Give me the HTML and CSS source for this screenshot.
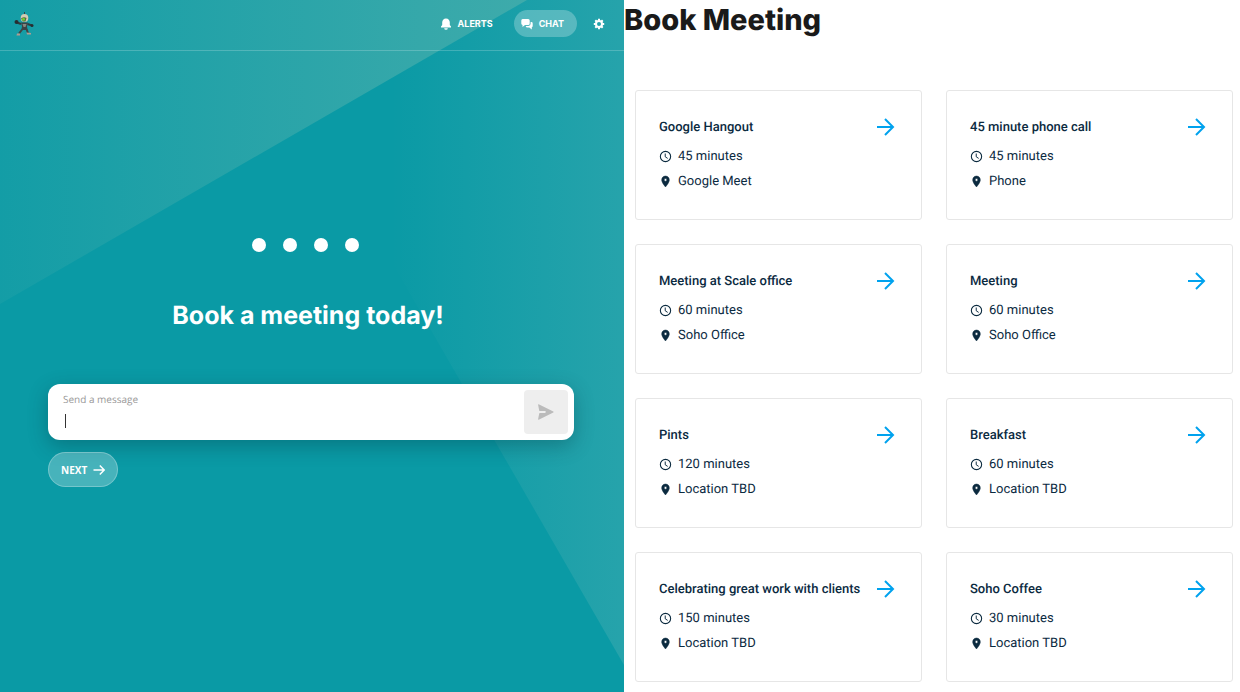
FILE: index.html
```html
<!DOCTYPE html>
<html lang="en">
<head>
    <meta charset="utf-8">
    <meta name="viewport" content="width=device-width, initial-scale=1">
    <title>Book Meeting</title>
    <link rel="stylesheet" href="styles.css">
</head>
<body>
    <!-- Shared icons -->
    <svg class="sprite" aria-hidden="true">
        <symbol id="arrow" viewBox="0 0 24 24">
            <path d="M3 11h16M11 3l8 8-8 8" fill="none" stroke="currentColor" stroke-width="2"/>
        </symbol>
        <symbol id="clock" viewBox="0 0 24 24">
            <circle cx="12" cy="12" r="9.5" fill="none" stroke="currentColor" stroke-width="2"/>
            <path d="M11.5 6.5v6l4.5 3" fill="none" stroke="currentColor" stroke-width="1.8"/>
        </symbol>
        <symbol id="pin" viewBox="0 0 24 24">
            <path d="M12 2C8.1 2 5 5.1 5 9c0 5.2 7 13 7 13s7-7.8 7-13c0-3.9-3.1-7-7-7zm0 9.5a2.5 2.5 0 0 1 0-5 2.5 2.5 0 0 1 0 5z" fill="currentColor" stroke="currentColor"/>
        </symbol>
    </svg>

    <div class="layout">
        <section class="chat">
            <svg class="backdrop" viewBox="0 0 624 692" preserveAspectRatio="xMidYMid slice" aria-hidden="true">
                <defs>
                    <linearGradient id="beamTop" gradientUnits="userSpaceOnUse" x1="0" y1="0" x2="526" y2="0">
                        <stop offset="0" stop-color="#f5e6c0" stop-opacity="0.04"/>
                        <stop offset="1" stop-color="#f5e6c0" stop-opacity="0.22"/>
                    </linearGradient>
                    <linearGradient id="beamRight" gradientUnits="userSpaceOnUse" x1="390" y1="0" x2="624" y2="0">
                        <stop offset="0" stop-color="#f5e6d8" stop-opacity="0"/>
                        <stop offset="1" stop-color="#f5e6d8" stop-opacity="0.12"/>
                    </linearGradient>
                </defs>
                <path d="M0 0H527L0 304z" fill="url(#beamTop)"/>
                <path d="M527 0H624V665L390 259V79z" fill="url(#beamRight)"/>
            </svg>

            <header class="topbar">
                <a class="logo" href="#" aria-label="Home">
                    <svg viewBox="0 0 20 24">
                        <path d="M10.5 0v3" stroke="#33464a" stroke-width="1"/>
                        <path d="M7 12 3 10.5M13.5 12l4.5 1.5" stroke="#303a3e" stroke-width="2" fill="none"/>
                        <path d="M8.5 17 5 21.5M12.5 17l1.5 4" stroke="#3f4646" stroke-width="2" fill="none"/>
                        <path d="M7 10.5h7l-1 4 .5 3.5h-6l.5-3.5z" fill="#3c4245"/>
                        <path d="M8.5 12h4l-1 3h-2z" fill="#858780"/>
                        <circle cx="2.5" cy="10" r="2" fill="#262e31"/>
                        <circle cx="18" cy="13.5" r="1.5" fill="#262e31"/>
                        <path d="M3 21.5h3v2H2.5zM12.5 20.5l4.5.5v1.5h-4z" fill="#b09c91"/>
                        <ellipse cx="10.5" cy="6" rx="3.8" ry="4" fill="#d3cbb2"/>
                        <path d="M7 6.5q3-2 5.5-.5l-1 3.5H9z" fill="#546747"/>
                        <circle cx="9.5" cy="7.3" r="1.5" fill="#6fce2c"/>
                    </svg>
                </a>
                <nav class="menu">
                    <button class="menu-item" type="button">
                        <svg viewBox="0 0 12 12"><path d="M6 .5C3.600.5 2.200 2.200 2.200 4.500v2.500L1 8.500v1h10v-1L9.800 7V4.500C9.800 2.200 8.400.5 6 .5zM4.200 10.200a1.800 1.500 0 0 0 3.600 0z" fill="currentColor"/></svg>
                        Alerts
                    </button>
                    <button class="menu-item active" type="button">
                        <svg viewBox="0 0 12 12"><path d="M2 1h5.200A1.500 1.500 0 0 1 8.700 2.500v3A1.500 1.500 0 0 1 7.200 7H4L1.500 9V7Q.3 6.800.3 5.500v-3A1.500 1.500 0 0 1 2 1zM9.600 4h.6A1.400 1.400 0 0 1 11.700 5.400v2.600q0 1-.9 1.300v2.200L8.300 9.500H6.300Q5 9.500 4.700 8H7.500Q9.600 7.900 9.600 5.800z" fill="currentColor"/></svg>
                        Chat
                    </button>
                    <button class="menu-item settings" type="button" aria-label="Settings">
                        <svg viewBox="0 0 12 12"><circle cx="6" cy="6" r="3" fill="none" stroke="currentColor" stroke-width="2"/><path d="M6 .8v2M6 9.200v2M.8 6h2M9.200 6h2M2.300 2.300l1.400 1.400M8.300 8.300l1.400 1.400M2.300 9.700l1.400-1.400M8.300 3.700l1.400-1.400" stroke="currentColor" stroke-width="2"/></svg>
                    </button>
                </nav>
            </header>

            <main class="conversation">
                <div class="intro">
                    <div class="dots"><i></i><i></i><i></i><i></i></div>
                    <h2>Book a meeting today!</h2>
                </div>
                <form class="composer">
                    <div class="field">
                        <label for="message">Send a message</label>
                        <input type="text" id="message" autocomplete="off">
                    </div>
                    <button class="send" type="button" aria-label="Send">
                        <svg viewBox="0 0 16 16"><path d="M.7.3Q.2 0 .1.700L1.200 6.500Q1.300 7.100 2 7.100H7Q7.800 7.200 7.800 8T7 8.900H2Q1.300 8.900 1.200 9.500L.1 15.300Q.2 16 .7 15.700L15.300 8.500Q16 8 15.300 7.500z" fill="currentColor"/></svg>
                    </button>
                </form>
                <button class="next" type="button">
                    Next
                    <svg viewBox="0 0 12 12"><path d="M.5 6h10.500M6.800 1.500 11.200 6l-4.400 4.500" fill="none" stroke="currentColor" stroke-width="1.500"/></svg>
                </button>
            </main>
        </section>

        <section class="booking">
            <h1>Book Meeting</h1>
            <div class="cards">
                <a class="card" href="#">
                    <h3>Google Hangout <svg><use href="#arrow"/></svg></h3>
                    <p><svg><use href="#clock"/></svg>45 minutes</p>
                    <p><svg><use href="#pin"/></svg>Google Meet</p>
                </a>
                <a class="card" href="#">
                    <h3>45 minute phone call <svg><use href="#arrow"/></svg></h3>
                    <p><svg><use href="#clock"/></svg>45 minutes</p>
                    <p><svg><use href="#pin"/></svg>Phone</p>
                </a>
                <a class="card" href="#">
                    <h3>Meeting at Scale office <svg><use href="#arrow"/></svg></h3>
                    <p><svg><use href="#clock"/></svg>60 minutes</p>
                    <p><svg><use href="#pin"/></svg>Soho Office</p>
                </a>
                <a class="card" href="#">
                    <h3>Meeting <svg><use href="#arrow"/></svg></h3>
                    <p><svg><use href="#clock"/></svg>60 minutes</p>
                    <p><svg><use href="#pin"/></svg>Soho Office</p>
                </a>
                <a class="card" href="#">
                    <h3>Pints <svg><use href="#arrow"/></svg></h3>
                    <p><svg><use href="#clock"/></svg>120 minutes</p>
                    <p><svg><use href="#pin"/></svg>Location TBD</p>
                </a>
                <a class="card" href="#">
                    <h3>Breakfast <svg><use href="#arrow"/></svg></h3>
                    <p><svg><use href="#clock"/></svg>60 minutes</p>
                    <p><svg><use href="#pin"/></svg>Location TBD</p>
                </a>
                <a class="card" href="#">
                    <h3>Celebrating great work with clients <svg><use href="#arrow"/></svg></h3>
                    <p><svg><use href="#clock"/></svg>150 minutes</p>
                    <p><svg><use href="#pin"/></svg>Location TBD</p>
                </a>
                <a class="card" href="#">
                    <h3>Soho Coffee <svg><use href="#arrow"/></svg></h3>
                    <p><svg><use href="#clock"/></svg>30 minutes</p>
                    <p><svg><use href="#pin"/></svg>Location TBD</p>
                </a>
            </div>
        </section>
    </div>
</body>
</html>
```

FILE: styles.css
```css
* { box-sizing: border-box; }
body {
    margin: 0;
    background: #fff;
    font-family: Roboto, sans-serif;
    text-rendering: geometricPrecision;
}
h1, h2, h3, p { margin: 0; }
button {
    border: none;
    background: none;
    color: #fff;
    cursor: pointer;
}
.sprite { display: none; }
.layout {
    display: grid;
    grid-template-columns: 624fr 616fr;
    min-height: 100vh;
}

/* Chat side */
.chat {
    position: relative;
    background: #0a9aa5;
    color: #fff;
}
.backdrop {
    position: absolute;
    inset: 0;
    width: 100%;
    height: 100%;
}
.topbar {
    position: relative;
    display: flex;
    align-items: center;
    justify-content: space-between;
    height: 51px;
    padding: 0 16px 3px 14px;
    border-bottom: 1px solid rgba(255, 255, 255, 0.2);
}
.logo svg {
    display: block;
    width: 20px;
    height: 24px;
}
.menu {
    display: flex;
    align-items: center;
    gap: 8px;
}
.menu-item {
    display: flex;
    align-items: center;
    gap: 6px;
    height: 27px;
    padding: 0 13px;
    border-radius: 14px;
    font: 700 9px Inter, sans-serif;
    text-transform: uppercase;
}
.menu-item svg {
    width: 12px;
    height: 12px;
}
.menu-item.active {
    padding: 0 13px 0 7px;
    background: rgba(255, 255, 255, 0.25);
}
.menu-item.settings { padding: 0 3px 0 8px; }

.conversation {
    position: relative;
    padding: 187px 50px 48px 48px;
}
.intro {
    padding-right: 6px;
    text-align: center;
}
.dots {
    display: flex;
    justify-content: center;
    gap: 17px;
    padding-right: 5px;
}
.dots i {
    width: 14px;
    height: 14px;
    border-radius: 50%;
    background: #fff;
}
h2 {
    margin: 44px 0 48px;
    font: 700 25px/40px Inter, sans-serif;
}
.composer {
    display: flex;
    padding: 6px;
    border-radius: 12px;
    background: #fff;
    box-shadow: 0 6px 20px rgba(0, 40, 50, 0.3);
}
.field {
    flex: 1;
    padding: 2px 9px;
}
.field label {
    display: block;
    color: #999;
    font: 10px/14px "Open Sans", sans-serif;
}
.field input {
    display: block;
    width: 100%;
    height: 24px;
    padding: 0 2px;
    border: none;
    outline: none;
    background: linear-gradient(#333, #333) no-repeat 2px 8px / 1px 14px;
    font: 13px "Open Sans", sans-serif;
}
.send {
    display: flex;
    align-items: center;
    justify-content: center;
    width: 44px;
    height: 44px;
    padding: 0;
    border-radius: 4px;
    background: #eee;
    color: #bbb;
}
.send svg {
    width: 16px;
    height: 16px;
}
.next {
    display: flex;
    align-items: center;
    gap: 6px;
    height: 35px;
    margin-top: 12px;
    padding: 0 12px;
    border: 1px solid rgba(255, 255, 255, 0.25);
    border-radius: 18px;
    background: rgba(255, 255, 255, 0.25);
    font: 700 10px "Open Sans", sans-serif;
    text-transform: uppercase;
}
.next svg {
    width: 12px;
    height: 12px;
}

/* Booking side */
h1 {
    color: #1a1a1a;
    font: 800 29px/40px Inter, sans-serif;
}
.cards {
    display: grid;
    grid-template-columns: 1fr 1fr;
    grid-auto-rows: minmax(130px, auto);
    gap: 24px;
    padding: 50px 7px 10px 11px;
}
.card {
    padding: 25px 23px 20px;
    border: 1px solid #e6e6e6;
    border-radius: 3px;
    color: #0b2a3f;
    text-decoration: none;
}
.card:hover { border-color: #00a2ee; }
.card h3 {
    display: flex;
    align-items: center;
    justify-content: space-between;
    margin-bottom: 8px;
    font: 500 13px/24px Roboto, sans-serif;
}
.card h3 svg {
    flex: none;
    width: 24px;
    height: 24px;
    color: #00a2ee;
}
.card p {
    display: flex;
    align-items: center;
    gap: 6px;
    margin-bottom: 8px;
    font-size: 13px;
    line-height: 17px;
}
.card p:last-child { margin-bottom: 0; }
.card p svg {
    width: 13px;
    height: 13px;
}
```
